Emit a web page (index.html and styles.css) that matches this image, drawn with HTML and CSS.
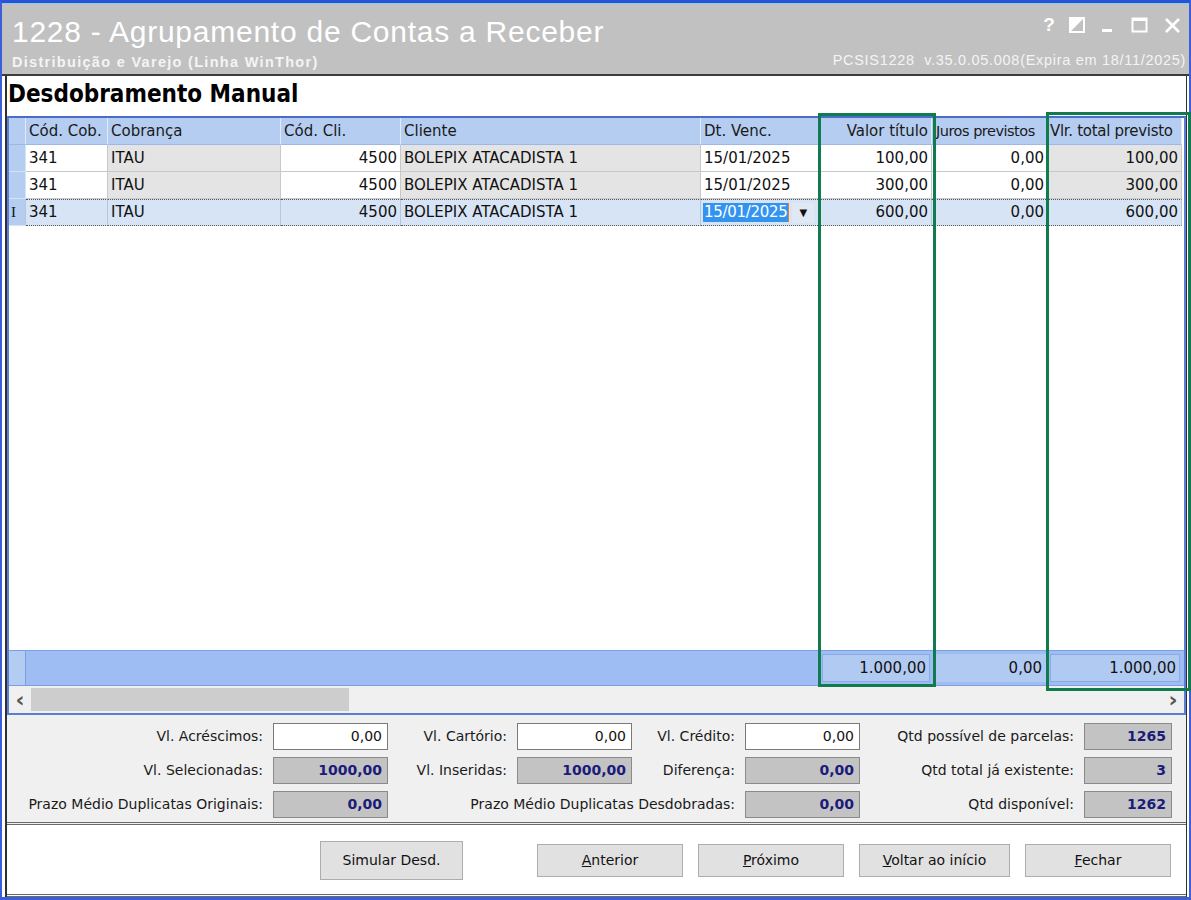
FILE: index.html
```html
<!DOCTYPE html>
<html lang="pt-BR">
<head>
<meta charset="utf-8">
<title>1228 - Agrupamento de Contas a Receber</title>
<link rel="stylesheet" href="styles.css">
</head>
<body>
<div class="window">
  <div class="titlebar">
    <div class="title-left">
      <div class="title">1228 - Agrupamento de Contas a Receber</div>
      <div class="subtitle">Distribuição e Varejo (Linha WinThor)</div>
    </div>
    <div class="title-right">
      <div class="win-icons">
        <span class="wi-help">?</span>
        <svg class="wi" width="16" height="16" viewBox="0 0 16 16"><rect x="1" y="1" width="14" height="14" fill="none" stroke="#fff" stroke-width="2"/><path d="M1 1 L15 1 L1 15 Z" fill="#fff"/></svg>
        <svg class="wi" width="14" height="16" viewBox="0 0 14 16"><rect x="1" y="12" width="10" height="3" fill="#fff"/></svg>
        <svg class="wi" width="17" height="16" viewBox="0 0 17 16"><rect x="1.5" y="1.5" width="14" height="13" fill="none" stroke="#fff" stroke-width="2"/><rect x="1" y="1" width="15" height="3" fill="#fff"/></svg>
        <svg class="wi" width="17" height="17" viewBox="0 0 17 17"><path d="M2 2 L15 15 M15 2 L2 15" stroke="#fff" stroke-width="2.6"/></svg>
      </div>
      <div class="version">PCSIS1228&nbsp; v.35.0.05.008(Expira em 18/11/2025)</div>
    </div>
  </div>

  <div class="content">
    <h1 class="heading">Desdobramento Manual</h1>

    <div class="grid">
      <div class="row head">
        <div class="c ind"></div>
        <div class="c c1">Cód. Cob.</div>
        <div class="c c2">Cobrança</div>
        <div class="c c3">Cód. Cli.</div>
        <div class="c c4">Cliente</div>
        <div class="c c5">Dt. Venc.</div>
        <div class="c c6 r">Valor título</div>
        <div class="c c7 clip">Juros previstos</div>
        <div class="c c8 tight">Vlr. total previsto</div>
      </div>
      <div class="row data">
        <div class="c ind"></div>
        <div class="c c1">341</div>
        <div class="c c2 gray">ITAU</div>
        <div class="c c3 r">4500</div>
        <div class="c c4 gray">BOLEPIX ATACADISTA 1</div>
        <div class="c c5">15/01/2025</div>
        <div class="c c6 r">100,00</div>
        <div class="c c7 r">0,00</div>
        <div class="c c8 r gray">100,00</div>
      </div>
      <div class="row data">
        <div class="c ind"></div>
        <div class="c c1">341</div>
        <div class="c c2 gray">ITAU</div>
        <div class="c c3 r">4500</div>
        <div class="c c4 gray">BOLEPIX ATACADISTA 1</div>
        <div class="c c5">15/01/2025</div>
        <div class="c c6 r">300,00</div>
        <div class="c c7 r">0,00</div>
        <div class="c c8 r gray">300,00</div>
      </div>
      <div class="row data sel">
        <div class="c ind"><span class="cursor">I</span></div>
        <div class="c c1">341</div>
        <div class="c c2">ITAU</div>
        <div class="c c3 r">4500</div>
        <div class="c c4">BOLEPIX ATACADISTA 1</div>
        <div class="c c5 edit"><span class="seltext">15/01/2025</span><span class="dd">▼</span></div>
        <div class="c c6 r">600,00</div>
        <div class="c c7 r">0,00</div>
        <div class="c c8 r">600,00</div>
      </div>
      <div class="grid-empty"></div>
      <div class="row foot">
        <div class="c ind"></div>
        <div class="fspan"></div>
        <div class="c c6 r"><span class="sum">1.000,00</span></div>
        <div class="c c7 r"><span class="sum plain">0,00</span></div>
        <div class="c c8 r"><span class="sum">1.000,00</span></div>
      </div>
      <div class="hscroll">
        <span class="arr">‹</span>
        <div class="track"><div class="thumb"></div></div>
        <span class="arr">›</span>
      </div>
    </div>

    <div class="fields">
      <label class="lbl">Vl. Acréscimos:</label><div class="inp">0,00</div>
      <label class="lbl">Vl. Cartório:</label><div class="inp">0,00</div>
      <label class="lbl">Vl. Crédito:</label><div class="inp">0,00</div>
      <label class="lbl">Qtd possível de parcelas:</label><div class="ro">1265</div>

      <label class="lbl">Vl. Selecionadas:</label><div class="ro">1000,00</div>
      <label class="lbl">Vl. Inseridas:</label><div class="ro">1000,00</div>
      <label class="lbl">Diferença:</label><div class="ro">0,00</div>
      <label class="lbl">Qtd total já existente:</label><div class="ro">3</div>

      <label class="lbl">Prazo Médio Duplicatas Originais:</label><div class="ro">0,00</div>
      <label class="lbl span3">Prazo Médio Duplicatas Desdobradas:</label><div class="ro">0,00</div>
      <label class="lbl">Qtd disponível:</label><div class="ro">1262</div>
    </div>

    <div class="buttons">
      <button class="btn big">Simular Desd.</button>
      <button class="btn"><u>A</u>nterior</button>
      <button class="btn"><u>P</u>róximo</button>
      <button class="btn wide"><u>V</u>oltar ao início</button>
      <button class="btn"><u>F</u>echar</button>
    </div>
  </div>

  <div class="mark mark1"></div>
  <div class="mark mark2"></div>
</div>
</body>
</html>
```

FILE: styles.css
```css
* { box-sizing: border-box; }
html, body { margin: 0; padding: 0; background: #fff; }
body { width: 1191px; height: 900px; overflow: hidden; }

.window {
  position: relative;
  width: 1191px;
  height: 900px;
  border-top: 3px solid #2a52d6;
  border-left: 2px solid #3b5fd8;
  border-right: 2px solid #3b5fd8;
  border-bottom: 3px solid #3b5fd8;
  display: flex;
  flex-direction: column;
  font-family: "DejaVu Sans", sans-serif;
  background: #fff;
}

.titlebar {
  height: 73px;
  background: #c1c1c1;
  border-top: 1px solid #7fd0e8;
  border-bottom: 2px solid #3c3c3c;
  display: flex;
  justify-content: space-between;
  color: #fff;
  font-family: "Liberation Sans", Arial, sans-serif;
}
.title-left { padding: 12px 0 0 10px; }
.title { font-size: 30px; line-height: 32px; letter-spacing: 0.75px; }
.subtitle { font-size: 14.5px; font-weight: bold; line-height: 16px; margin-top: 6px; color: #f4f4f4; letter-spacing: 1.3px; }
.title-right { display: flex; flex-direction: column; align-items: flex-end; padding: 10px 3px 0 0; }
.win-icons { display: flex; align-items: center; gap: 0; height: 22px; padding-right: 5px; }
.wi-help { font-size: 19px; font-weight: bold; width: 20px; text-align: center; margin-right: 10px; }
.wi { display: block; margin-left: 16px; }
.wi:first-of-type { margin-left: 0; }
.version { font-size: 14.5px; margin-top: 16px; color: #f4f4f4; letter-spacing: 0.7px; }

.content {
  flex: 1;
  display: flex;
  flex-direction: column;
  border-left: 2px solid #303030;
  border-right: 1px solid #303030;
  margin: 0 2px 0 3px;
}

.heading {
  margin: 0;
  height: 40px;
  padding: 3px 0 0 1px;
  font-family: "DejaVu Sans Condensed", "DejaVu Sans", sans-serif;
  font-size: 24px;
  font-weight: bold;
  color: #000;
  line-height: 30px;
}

.grid {
  height: 599px;
  display: flex;
  flex-direction: column;
  border: 2px solid #5b7fd6;
  border-top: 2px solid #4a6ccb;
  font-size: 15px;
  color: #111;
}
.row { display: flex; height: 27px; flex: none; }
.c {
  height: 100%;
  padding: 0 3px;
  line-height: 27px;
  white-space: nowrap;
  overflow: hidden;
  border-right: 1px solid #c8c8c8;
  border-bottom: 1px solid #c8c8c8;
}
.r { text-align: right; }
.ind { width: 17px; background: #b5cdf0; border-right: 1px solid #d6e2f6; border-bottom: 1px solid #d6e2f6; padding: 0; }
.c1 { width: 82px; }
.c2 { width: 173px; }
.c3 { width: 120px; }
.c4 { width: 300px; }
.c5 { width: 119px; }
.c6 { width: 112px; }
.c7 { width: 116px; }
.c8 { width: 134px; }

.head .c { background: #b5cdf0; border-right: 1px solid #e0ebfa; border-bottom: 1px solid #9db8e6; color: #1a1a1a; }
.head .clip { padding: 0 0 0 4px; font-size: 14.5px; letter-spacing: -0.5px; }
.head .tight { padding: 0 2px; letter-spacing: -0.3px; }
.data .c { background: #fff; }
.data .c.gray { background: #e4e4e4; }
.data .c.ind { background: #b5cdf0; }
.sel .c { background: #d6e4f5; border-bottom: 1px dotted #555; border-top: 1px dotted #555; border-right-color: #b8c6d8; line-height: 25px; }
.sel .c.ind { background: #b5cdf0; border-top: 0; border-bottom: 1px solid #d6e2f6; line-height: 27px; }
.cursor { font-family: "Liberation Serif", serif; font-size: 15px; padding-left: 2px; }
.edit { display: flex; align-items: center; padding-left: 2px; }
.seltext { background: #3394f0; color: #fff; line-height: 19px; padding: 0 1px; border-right: 1px solid #e08030; letter-spacing: -0.3px; }
.dd { margin-left: 3px; width: 22px; height: 20px; background: #e0e8f4; text-align: center; font-size: 10px; line-height: 20px; color: #111; }

.grid-empty { flex: 1; background: #fff; }

.foot { height: 36px; background: #9ebef3; border-top: 1px solid #7d9ee0; border-bottom: 1px solid #7d9ee0; }
.foot .c { border: 0; line-height: 34px; padding: 3px 2px; }
.foot .ind { background: #b3ccf2; border-right: 1px solid #7d9ee0; }
.fspan { width: 794px; }
.sum {
  display: block;
  height: 28px;
  line-height: 26px;
  background: #b1caf1;
  border: 1px solid #8aaae6;
  padding-right: 3px;
}
.sum.plain { border-color: transparent; }

.hscroll { height: 27px; display: flex; align-items: center; background: #f0f0f0; flex: none; }
.arr { width: 22px; text-align: center; font-size: 22px; font-weight: bold; color: #555; line-height: 22px; font-family: "DejaVu Sans", sans-serif; }
.track { flex: 1; height: 23px; position: relative; }
.thumb { width: 318px; height: 100%; background: #cdcdcd; }

.fields {
  height: 110px;
  background: #f0f0f0;
  display: grid;
  grid-template-columns: 253px 115px 109px 115px 93px 115px 204px 88px;
  grid-auto-rows: 27px;
  column-gap: 10px;
  row-gap: 7px;
  padding: 8px 0 0 3px;
  border-bottom: 3px double #6a6a6a;
  font-size: 14px;
  color: #1a1a1a;
}
.lbl { text-align: right; line-height: 27px; white-space: nowrap; }
.span3 { grid-column: span 3; }
.inp, .ro {
  line-height: 25px;
  text-align: right;
  padding-right: 5px;
  font-size: 14px;
}
.inp { background: #fff; border: 1px solid #7a7a7a; color: #111; }
.ro { background: #c3c3c3; border: 1px solid #8a8a8a; color: #1b1b7a; font-weight: bold; }

.buttons {
  flex: 1;
  background: #fff;
  display: flex;
  align-items: center;
  padding: 1px 0 0 313px;
  gap: 15px;
  border-bottom: 3px double #6a6a6a;
}
.btn {
  width: 146px;
  height: 33px;
  background: #e1e1e1;
  border: 1px solid #adadad;
  font-family: "DejaVu Sans", sans-serif;
  font-size: 14px;
  color: #111;
  padding: 0;
}
.btn.wide { width: 151px; }
.btn.big { width: 143px; height: 39px; margin-right: 59px; }
.btn u { text-decoration: underline; }

.mark { position: absolute; border: 3px solid #0f7b4e; pointer-events: none; }
.mark1 { left: 816px; top: 110px; width: 118px; height: 574px; }
.mark2 { left: 1044px; top: 109px; width: 145px; height: 579px; }
```
